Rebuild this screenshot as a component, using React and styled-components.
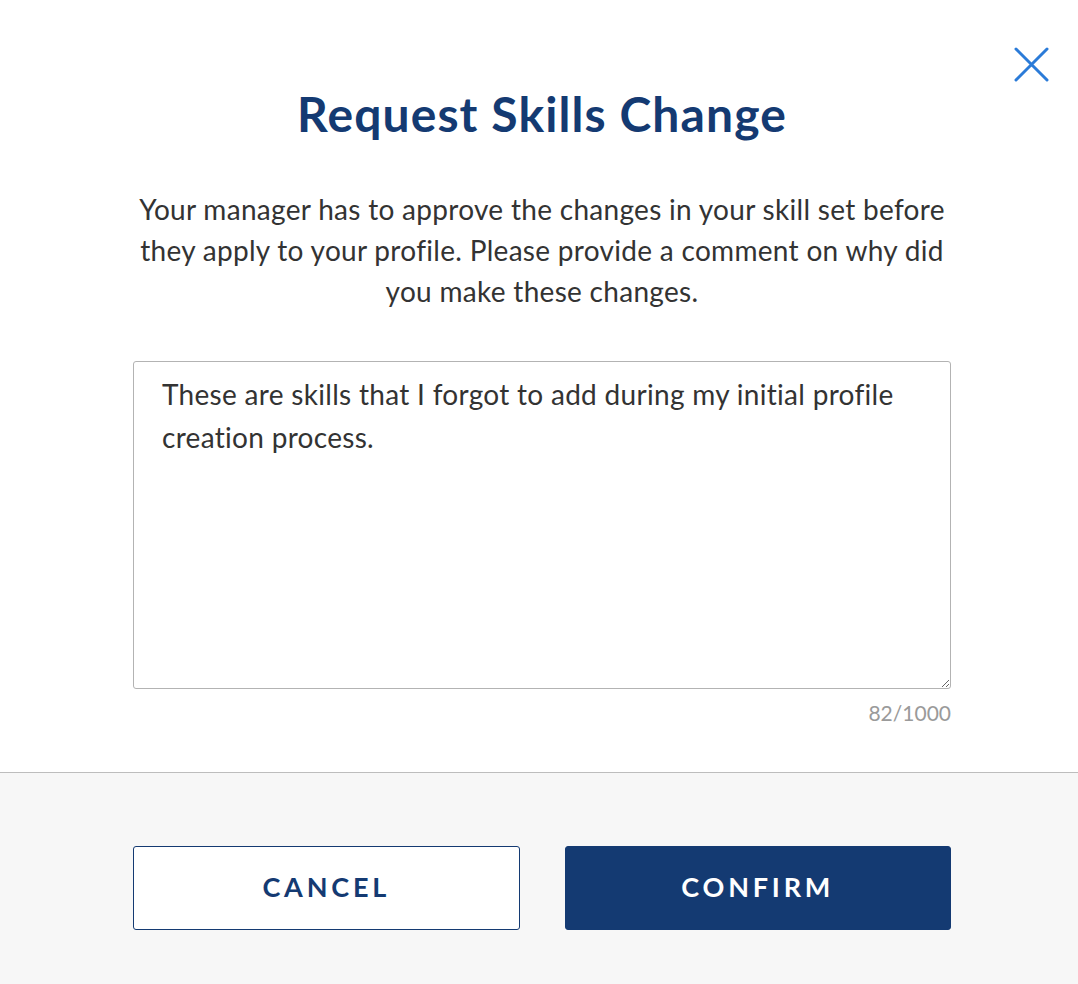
import React, { useState } from 'react'
import styled, { createGlobalStyle } from 'styled-components'

const NAVY = '#143a72'
const TEXT = '#333333'

const GlobalStyle = createGlobalStyle`
	html, body {
		margin: 0;
		padding: 0;
		background: #ffffff;
		font-family: Lato, "Open Sans", sans-serif;
	}
`

const Modal = styled.div`
	position: relative;
	width: 1078px;
	height: 984px;
	display: flex;
	flex-direction: column;
	background: #ffffff;
	overflow: hidden;
`

const CloseButton = styled.button`
	position: absolute;
	top: 47px;
	right: 29px;
	width: 35px;
	height: 35px;
	padding: 0;
	border: none;
	background: transparent;
	cursor: pointer;
	display: flex;
	align-items: center;
	justify-content: center;
`

const Body = styled.div`
	box-sizing: border-box;
	height: 772px;
	padding: 86px 127px 0 133px;
	display: flex;
	flex-direction: column;
`

const Title = styled.h2`
	margin: 0;
	text-align: center;
	font-size: 48px;
	font-weight: 700;
	line-height: 56px;
	letter-spacing: 1.1px;
	color: ${NAVY};
`

const Description = styled.p`
	margin: 47px 0 0;
	text-align: center;
	font-size: 28px;
	line-height: 41px;
	letter-spacing: 0.3px;
	color: ${TEXT};
`

const Comment = styled.textarea`
	margin-top: 49px;
	box-sizing: border-box;
	width: 100%;
	height: 328px;
	padding: 11px 28px 7px;
	border: 1px solid #b3b3b3;
	border-radius: 3px;
	font-family: Lato, "Open Sans", sans-serif;
	font-size: 28px;
	line-height: 43px;
	letter-spacing: 0.3px;
	color: ${TEXT};
	resize: vertical;
	outline: none;
`

const Counter = styled.div`
	margin-top: 12px;
	text-align: right;
	font-size: 21px;
	line-height: 24px;
	color: #9a9a9a;
`

const Footer = styled.div`
	flex: 1;
	border-top: 1px solid #bdbdbd;
	background: #f7f7f7;
	padding: 73px 127px 0 133px;
	display: flex;
	gap: 45px;
	align-items: flex-start;
`

const Button = styled.button`
	flex: 1;
	height: 84px;
	padding: 0 0 3px;
	border-radius: 3px;
	border: 1px solid ${NAVY};
	background: ${props => props.primary ? NAVY : '#ffffff'};
	color: ${props => props.primary ? '#ffffff' : NAVY};
	font-family: Lato, "Open Sans", sans-serif;
	font-size: 27px;
	font-weight: 700;
	letter-spacing: 3.8px;
	text-transform: uppercase;
	cursor: pointer;
`

const CloseIcon = () => (
	<svg width="35" height="35" viewBox="0 0 35 35">
		<path d="M2 2 L33 33 M33 2 L2 33" stroke="#2b7bd8" strokeWidth="3" strokeLinecap="round" fill="none" />
	</svg>
)

export default function App() {
	const [comment, setComment] = useState(
		'These are skills that I forgot to add during my initial profile creation process. '
	)

	return (
		<>
			<GlobalStyle />
			<Modal>
				<CloseButton aria-label="Close">
					<CloseIcon />
				</CloseButton>
				<Body>
					<Title>Request Skills Change</Title>
					<Description>
						Your manager has to approve the changes in your skill set before
						they apply to your profile. Please provide a comment on why did
						you make these changes.
					</Description>
					<Comment
						value={comment}
						maxLength={1000}
						onChange={e => setComment(e.target.value)}
					/>
					<Counter>{comment.length}/1000</Counter>
				</Body>
				<Footer>
					<Button>Cancel</Button>
					<Button primary>Confirm</Button>
				</Footer>
			</Modal>
		</>
	)
}
